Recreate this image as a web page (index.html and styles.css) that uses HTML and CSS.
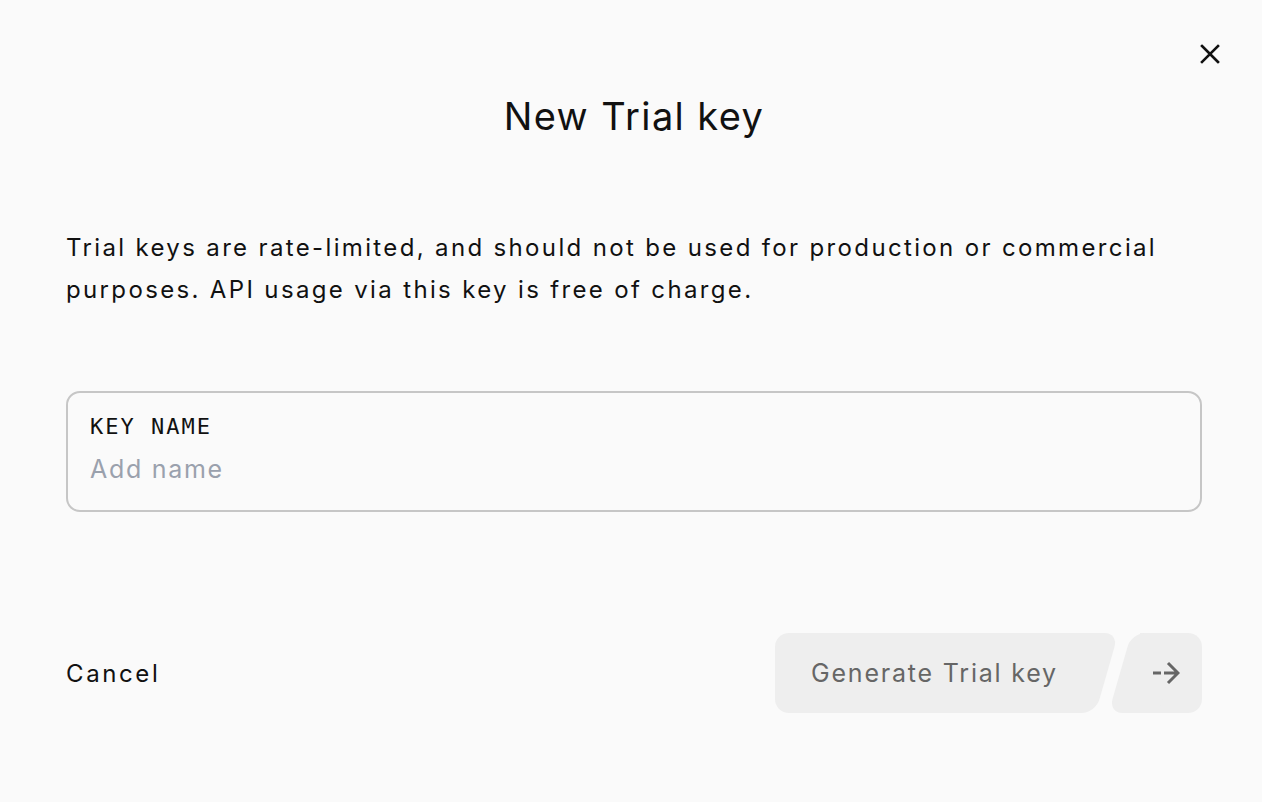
FILE: index.html
```html
<!DOCTYPE html>
<html lang="en">
<head>
  <meta charset="UTF-8">
  <title>New Trial key</title>
  <link rel="stylesheet" href="styles.css">
</head>
<body>
  <div class="dialog">
    <button class="close-btn" aria-label="Close">
      <svg width="20" height="20" viewBox="0 0 20 20">
        <path d="M2 2 L18 18 M18 2 L2 18" stroke="#111" stroke-width="2.6" stroke-linecap="square" fill="none"/>
      </svg>
    </button>

    <h2 class="title">New Trial key</h2>

    <p class="intro">Trial keys are rate-limited, and should not be used for production or commercial purposes. API usage via this key is free of charge.</p>

    <label class="field">
      <span class="field-label">KEY NAME</span>
      <input type="text" class="field-input" placeholder="Add name">
    </label>

    <div class="actions">
      <button class="cancel-btn">Cancel</button>
      <div class="submit">
        <button class="gen-btn">Generate Trial key</button>
        <button class="arrow-btn" aria-label="Generate">
          <svg width="28" height="26" viewBox="0 0 28 26">
            <path d="M1 13 H9 M12 13 H25 M16 3 L26 13 L16 23" stroke="#666" stroke-width="3" fill="none"/>
          </svg>
        </button>
      </div>
    </div>
  </div>
</body>
</html>
```

FILE: styles.css
```css
* {
  box-sizing: border-box;
}

body {
  margin: 0;
  background: #fafafa;
  font-family: Inter, "Noto Sans", sans-serif;
  color: #111;
}

.dialog {
  position: relative;
  width: 1262px;
  height: 802px;
  padding: 92px 60px 0 66px;
}

.close-btn {
  position: absolute;
  top: 44px;
  right: 42px;
  width: 20px;
  height: 20px;
  padding: 0;
  border: none;
  background: none;
  cursor: pointer;
}

.close-btn svg {
  display: block;
}

.title {
  margin: 0;
  text-align: center;
  font-size: 38px;
  line-height: 48px;
  font-weight: 400;
  letter-spacing: 1.4px;
}

.intro {
  margin: 87px 0 0;
  font-size: 24px;
  line-height: 42px;
  letter-spacing: 2.35px;
}

.field {
  display: flex;
  flex-direction: column;
  margin-top: 80px;
  padding: 21px 22px 25px;
  border: 2px solid #c6c6c6;
  border-radius: 14px;
}

.field-label {
  font-family: "DejaVu Sans Mono", monospace;
  font-size: 22px;
  line-height: 26px;
  letter-spacing: 2px;
  color: #111;
}

.field-input {
  margin-top: 13px;
  padding: 0;
  border: none;
  outline: none;
  background: transparent;
  font-family: Inter, sans-serif;
  font-size: 25px;
  line-height: 32px;
  height: 32px;
  letter-spacing: 1.7px;
  color: #111;
}

.field-input::placeholder {
  color: #9aa1ad;
}

.actions {
  display: flex;
  justify-content: space-between;
  align-items: center;
  margin-top: 121px;
}

.cancel-btn {
  padding: 0;
  border: none;
  background: none;
  font-family: Inter, sans-serif;
  font-size: 24px;
  letter-spacing: 2.6px;
  color: #111;
  cursor: pointer;
}

.submit {
  display: flex;
  gap: 65px;
}

.gen-btn,
.arrow-btn {
  position: relative;
  height: 80px;
  border: none;
  background: #eeeeee;
  font-family: Inter, sans-serif;
  font-size: 25px;
  color: #666;
  cursor: pointer;
}

.gen-btn {
  width: 300px;
  padding: 0 0 0 36px;
  text-align: left;
  white-space: nowrap;
  letter-spacing: 1.8px;
  border-radius: 14px 0 0 14px;
}

.gen-btn::after {
  content: "";
  position: absolute;
  top: 0;
  right: -32px;
  width: 54px;
  height: 80px;
  background: #eeeeee;
  border-radius: 0 14px 14px 0;
  transform: skewX(-16deg);
  z-index: -1;
}

.arrow-btn {
  width: 62px;
  padding: 0;
  border-radius: 0 14px 14px 0;
  display: flex;
  align-items: center;
  justify-content: center;
  z-index: 0;
}

.arrow-btn::before {
  content: "";
  position: absolute;
  top: 0;
  left: -20px;
  width: 50px;
  height: 80px;
  background: #eeeeee;
  border-radius: 14px 0 0 14px;
  transform: skewX(-16deg);
  z-index: -1;
}

.arrow-btn svg {
  position: relative;
  left: -5px;
}
```
